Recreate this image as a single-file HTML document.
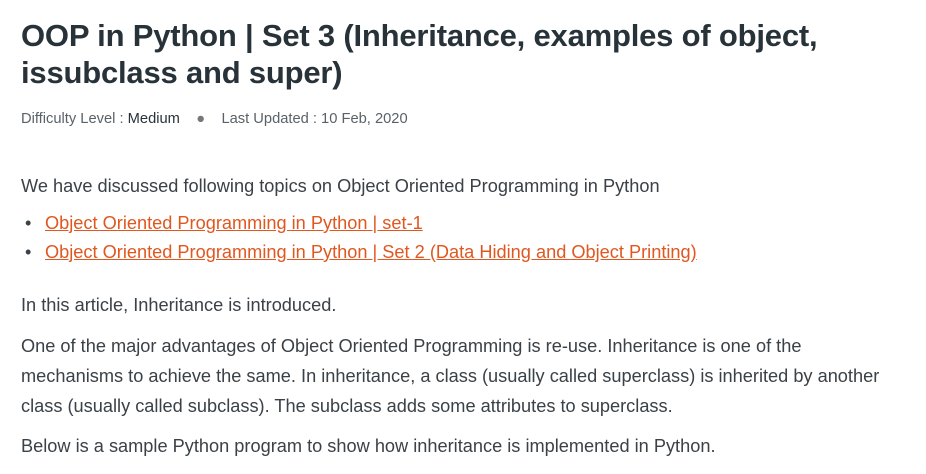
<!DOCTYPE html>
<html><head><meta charset="utf-8"><style>
body{margin:0;background:#fff;width:926px;height:474px;overflow:hidden;font-family:"Liberation Sans",sans-serif;color:#273239}
h1{position:absolute;left:21px;top:17px;margin:0;font-size:31px;line-height:37px;font-weight:bold;color:#273239;width:880px;letter-spacing:-0.2px}
.meta{position:absolute;left:21px;top:111px;font-size:14.7px;color:#5a6268}
.meta b{font-weight:normal;color:#273239}
p{position:absolute;left:21px;margin:0;font-size:18.2px;line-height:30px;color:#3a4147;width:870px}
ul{position:absolute;left:21px;margin:0;padding:0;list-style:none;font-size:18.2px;line-height:29px}
li:before{content:"•";color:#3a4147;position:absolute;left:4px}
li{padding-left:24px}
a{color:#e0571f;text-decoration:underline}
</style></head><body>
<h1>OOP in Python | Set 3 (Inheritance, examples of object, issubclass and super)</h1>
<div class="meta">Difficulty Level : <b>Medium</b> &nbsp;&nbsp;&nbsp;<span style="color:#777">●</span>&nbsp;&nbsp;&nbsp; Last Updated : 10 Feb, 2020</div>
<p style="top:171px">We have discussed following topics on Object Oriented Programming in Python</p>
<ul style="top:209px"><li><a>Object Oriented Programming in Python | set-1</a></li><li><a>Object Oriented Programming in Python | Set 2 (Data Hiding and Object Printing)</a></li></ul>
<p style="top:290px">In this article, Inheritance is introduced.</p>
<p style="top:331px">One of the major advantages of Object Oriented Programming is re-use. Inheritance is one of the mechanisms to achieve the same. In inheritance, a class (usually called superclass) is inherited by another class (usually called subclass). The subclass adds some attributes to superclass.</p>
<p style="top:431px">Below is a sample Python program to show how inheritance is implemented in Python.</p>
</body></html>
